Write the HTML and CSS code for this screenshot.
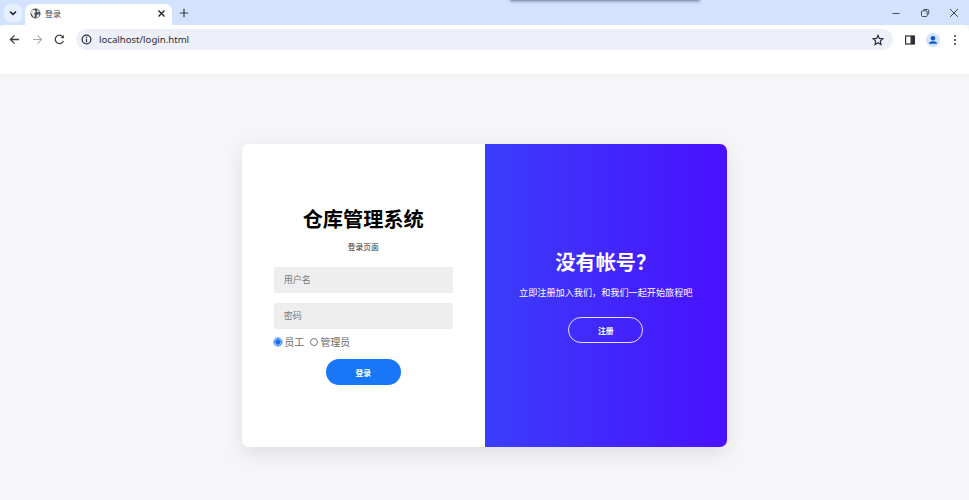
FILE: index.html
```html
<!DOCTYPE html>
<html lang="zh">
<head>
<meta charset="utf-8">
<title>登录</title>
<link rel="stylesheet" href="styles.css">
</head>
<body>
<div class="browser">
  <div class="popup-edge"></div>
  <div class="tabstrip">
    <div class="tab-search"><svg width="10" height="10" viewBox="0 0 10 10"><path d="M2 3.6 5 6.4 8 3.6" fill="none" stroke="#1f2a3a" stroke-width="1.5"/></svg></div>
    <div class="tab">
      <svg class="globe" width="11" height="11" viewBox="0 0 12 12"><circle cx="6" cy="6" r="5.5" fill="#4a4f57"/><path d="M2 2.5 5 2 6.5 4 4.5 6 5.5 8 4.5 10.5 2.5 8 1 5ZM8 1.5 10.5 4 8.5 5 7.5 3.5ZM7.5 7 10.5 7 9 10 7 10.5Z" fill="#e8eaee"/></svg>
      <span class="tab-title">登录</span>
      <svg class="tab-close" width="9" height="9" viewBox="0 0 9 9"><path d="M1.5 1.5 7.5 7.5M7.5 1.5 1.5 7.5" stroke="#22262c" stroke-width="1.4"/></svg>
    </div>
    <svg class="new-tab" width="10" height="10" viewBox="0 0 10 10"><path d="M5 .8V9.200M.8 5H9.200" stroke="#3a3f47" stroke-width="1.200"/></svg>
    <div class="window-controls">
      <svg width="10" height="10" viewBox="0 0 10 10"><path d="M1.500 5.500H8.500" stroke="#4a4f57" stroke-width="1"/></svg>
      <svg width="10" height="10" viewBox="0 0 10 10"><rect x="1.500" y="2.800" width="5.700" height="5.700" rx="1" fill="none" stroke="#4a4f57"/><path d="M3.500 1.500H7.500Q8.700 1.500 8.700 2.700V6.500" fill="none" stroke="#4a4f57"/></svg>
      <svg width="10" height="10" viewBox="0 0 10 10"><path d="M1.200 1.200 8.800 8.800M8.800 1.200 1.200 8.800" stroke="#3a3f47" stroke-width="1"/></svg>
    </div>
  </div>
  <div class="toolbar">
    <div class="nav-buttons">
      <svg width="11" height="11" viewBox="0 0 12 12"><path d="M11 6H1.500M6 1.500 1.500 6 6 10.500" fill="none" stroke="#3a3f47" stroke-width="1.400"/></svg>
      <svg width="11" height="11" viewBox="0 0 12 12"><path d="M1 6H10.500M6 1.500 10.500 6 6 10.500" fill="none" stroke="#a6a9ae" stroke-width="1.200"/></svg>
      <svg width="11" height="11" viewBox="0 0 12 12"><path d="M10.300 7.500A4.600 4.600 0 1 1 9.500 2.800" fill="none" stroke="#3a3f47" stroke-width="1.400"/><path d="M10.800 .8V4.500H7.100Z" fill="#3a3f47"/></svg>
    </div>
    <div class="omnibox">
      <span class="site-info"><svg width="11" height="11" viewBox="0 0 12 12"><circle cx="6" cy="6" r="4.800" fill="none" stroke="#2b2f36" stroke-width="1.300"/><path d="M6 5.300V9M6 3V4.300" stroke="#2b2f36" stroke-width="1.300"/></svg></span>
      <span class="url">localhost/login.html</span>
      <svg class="star" width="12" height="12" viewBox="0 0 12 12"><path d="M6 1.300 7.400 4.400 10.800 4.800 8.300 7.100 9 10.500 6 8.800 3 10.500 3.700 7.100 1.200 4.800 4.600 4.400Z" fill="none" stroke="#2b2f36" stroke-width="1.200"/></svg>
    </div>
    <div class="toolbar-actions">
      <svg width="10" height="10" viewBox="0 0 10 10"><rect x=".6" y="1" width="8.800" height="8" fill="none" stroke="#2b2f36" stroke-width="1.200"/><rect x="5.500" y="1" width="4" height="8" fill="#2b2f36"/></svg>
      <span class="avatar"><svg width="14" height="14" viewBox="0 0 14 14"><circle cx="7" cy="7" r="7" fill="#d3e3fd"/><circle cx="7" cy="5.300" r="2.300" fill="#0b57d0"/><path d="M2.800 10.800Q3 8.300 7 8.300T11.200 10.800Z" fill="#0b57d0"/></svg></span>
      <svg class="kebab" width="4" height="12" viewBox="0 0 4 12"><circle cx="2" cy="2" r="1.100" fill="#3a3f47"/><circle cx="2" cy="6" r="1.100" fill="#3a3f47"/><circle cx="2" cy="10" r="1.100" fill="#3a3f47"/></svg>
    </div>
  </div>
  <div class="bookmarks"></div>
</div>
<main class="page">
  <section class="card">
    <form class="login">
      <h1 class="login-title">仓库管理系统</h1>
      <p class="login-sub">登录页面</p>
      <input class="field" type="text" placeholder="用户名">
      <input class="field" type="password" placeholder="密码">
      <div class="roles">
        <label class="role"><input type="radio" name="role" checked>员工</label>
        <label class="role"><input type="radio" name="role">管理员</label>
      </div>
      <button class="btn btn-primary" type="button">登录</button>
    </form>
    <aside class="promo">
      <h2 class="promo-title">没有帐号？</h2>
      <p class="promo-text">立即注册加入我们，和我们一起开始旅程吧</p>
      <button class="btn btn-ghost" type="button">注册</button>
    </aside>
  </section>
</main>
</body>
</html>
```
FILE: styles.css
```css
* { box-sizing: border-box; }
html, body { margin: 0; height: 100%; overflow: hidden; }
body {
  width: 969px;
  height: 500px;
  display: flex;
  flex-direction: column;
  background: #f6f6f9;
  font-family: "Noto Sans CJK SC", "Liberation Sans", sans-serif;
}
.browser { position: relative; flex: none; }
.popup-edge {
  position: absolute;
  left: 511px;
  top: -3px;
  width: 188px;
  height: 3.500px;
  background: #8f9cb8;
  box-shadow: 0 0 3px 1px rgba(90, 105, 140, .5);
}
.tabstrip {
  height: 25px;
  background: #d3e3fd;
  display: flex;
  align-items: flex-start;
  padding: 4px 0 0 4px;
}
.tab-search {
  width: 18px;
  height: 18px;
  margin-right: 3px;
  border-radius: 6px;
  background: #e6effd;
  display: flex;
  align-items: center;
  justify-content: center;
}
.tab {
  width: 147px;
  height: 21px;
  background: #fff;
  border-radius: 7px 7px 0 0;
  display: flex;
  align-items: center;
  padding: 0 6px 3px 5px;
}
.globe { margin-right: 4px; }
.tab-title { font-size: 8px; color: #45494f; flex: 1; }
.new-tab { margin: 4px 0 0 7px; }
.window-controls {
  margin: 4px 0 0 auto;
  display: flex;
  gap: 19px;
  padding-right: 10px;
}
.toolbar {
  height: 29px;
  background: #fff;
  display: flex;
  align-items: flex-start;
  border-radius: 7px 7px 0 0;
  padding: 4px 10px 0 9px;
}
.nav-buttons {
  display: flex;
  gap: 11.500px;
  width: 67px;
  height: 21px;
  align-items: center;
}
.omnibox {
  width: 817px;
  height: 21px;
  background: #edf0f8;
  border-radius: 11px;
  display: flex;
  align-items: center;
  padding: 0 9px 0 5px;
}
.site-info { display: flex; width: 18px; }
.url {
  flex: 1;
  font-family: "Noto Sans", "Liberation Sans", sans-serif;
  font-size: 9.600px;
  color: #2a2d33;
}
.toolbar-actions {
  display: flex;
  align-items: center;
  height: 21px;
  margin-left: 12px;
  gap: 10.500px;
}
.avatar { display: flex; }
.kebab { margin-left: 3px; }
.bookmarks { height: 21px; background: #fff; border-bottom: 1px solid #f0f0f3; }
.page {
  flex: 1;
  display: flex;
  justify-content: center;
  padding-top: 69px;
}
.card {
  width: 485px;
  height: 303px;
  display: flex;
  border-radius: 7px;
  overflow: hidden;
  background: #fff;
  box-shadow: 0 6px 20px rgba(0, 0, 0, .1);
}
.login {
  width: 242.500px;
  padding: 0 32px;
  display: flex;
  flex-direction: column;
  align-items: center;
}
.login-title {
  margin: 63px 0 0;
  font-size: 20.200px;
  line-height: 24px;
  font-weight: 700;
  color: #000;
}
.login-sub {
  margin: 10px 0 0;
  font-size: 7.800px;
  line-height: 12px;
  color: #333;
}
.field {
  width: 179px;
  height: 26px;
  margin: 0;
  border: 0;
  outline: 0;
  padding: 0 10px 1px;
  background: #eee;
  font: 9px "Noto Sans CJK SC", sans-serif;
}
.login-sub + .field { margin-top: 14px; }
.field + .field { margin-top: 10px; }
.field::placeholder { color: #777; opacity: 1; }
.roles {
  align-self: flex-start;
  margin-top: 5px;
  display: flex;
  gap: 6px;
  height: 16px;
  align-items: center;
}
.role {
  display: flex;
  align-items: center;
  font-size: 9.800px;
  color: #666;
}
.role input {
  appearance: none;
  width: 8px;
  height: 8px;
  margin: 0 2.500px 0 0;
  border-radius: 50%;
  border: 1px solid #777;
  background: #fff;
}
.role input:checked {
  border-color: #1a73e8;
  background: radial-gradient(circle, #1a73e8 0 2.400px, #fff 2.900px);
  box-shadow: 0 0 0 1px rgba(26, 115, 232, .35);
}
.btn {
  width: 75px;
  height: 26px;
  border-radius: 13px;
  color: #fff;
  font: 700 7.800px "Noto Sans CJK SC", sans-serif;
  padding: 0;
  cursor: pointer;
}
.btn-primary {
  margin-top: 9px;
  border: 0;
  background: #1877f6;
}
.promo {
  width: 242.500px;
  display: flex;
  flex-direction: column;
  align-items: center;
  color: #fff;
  background: linear-gradient(90deg, #3a3efb, #4a10fe);
}
.promo-title {
  margin: 106px 0 0;
  font-size: 20.200px;
  line-height: 24px;
  font-weight: 700;
}
.promo-text {
  margin: 11px 0 0;
  font-size: 9.150px;
  line-height: 14px;
}
.btn-ghost {
  margin-top: 18px;
  border: 1px solid #e4e0ff;
  background: transparent;
}
```
